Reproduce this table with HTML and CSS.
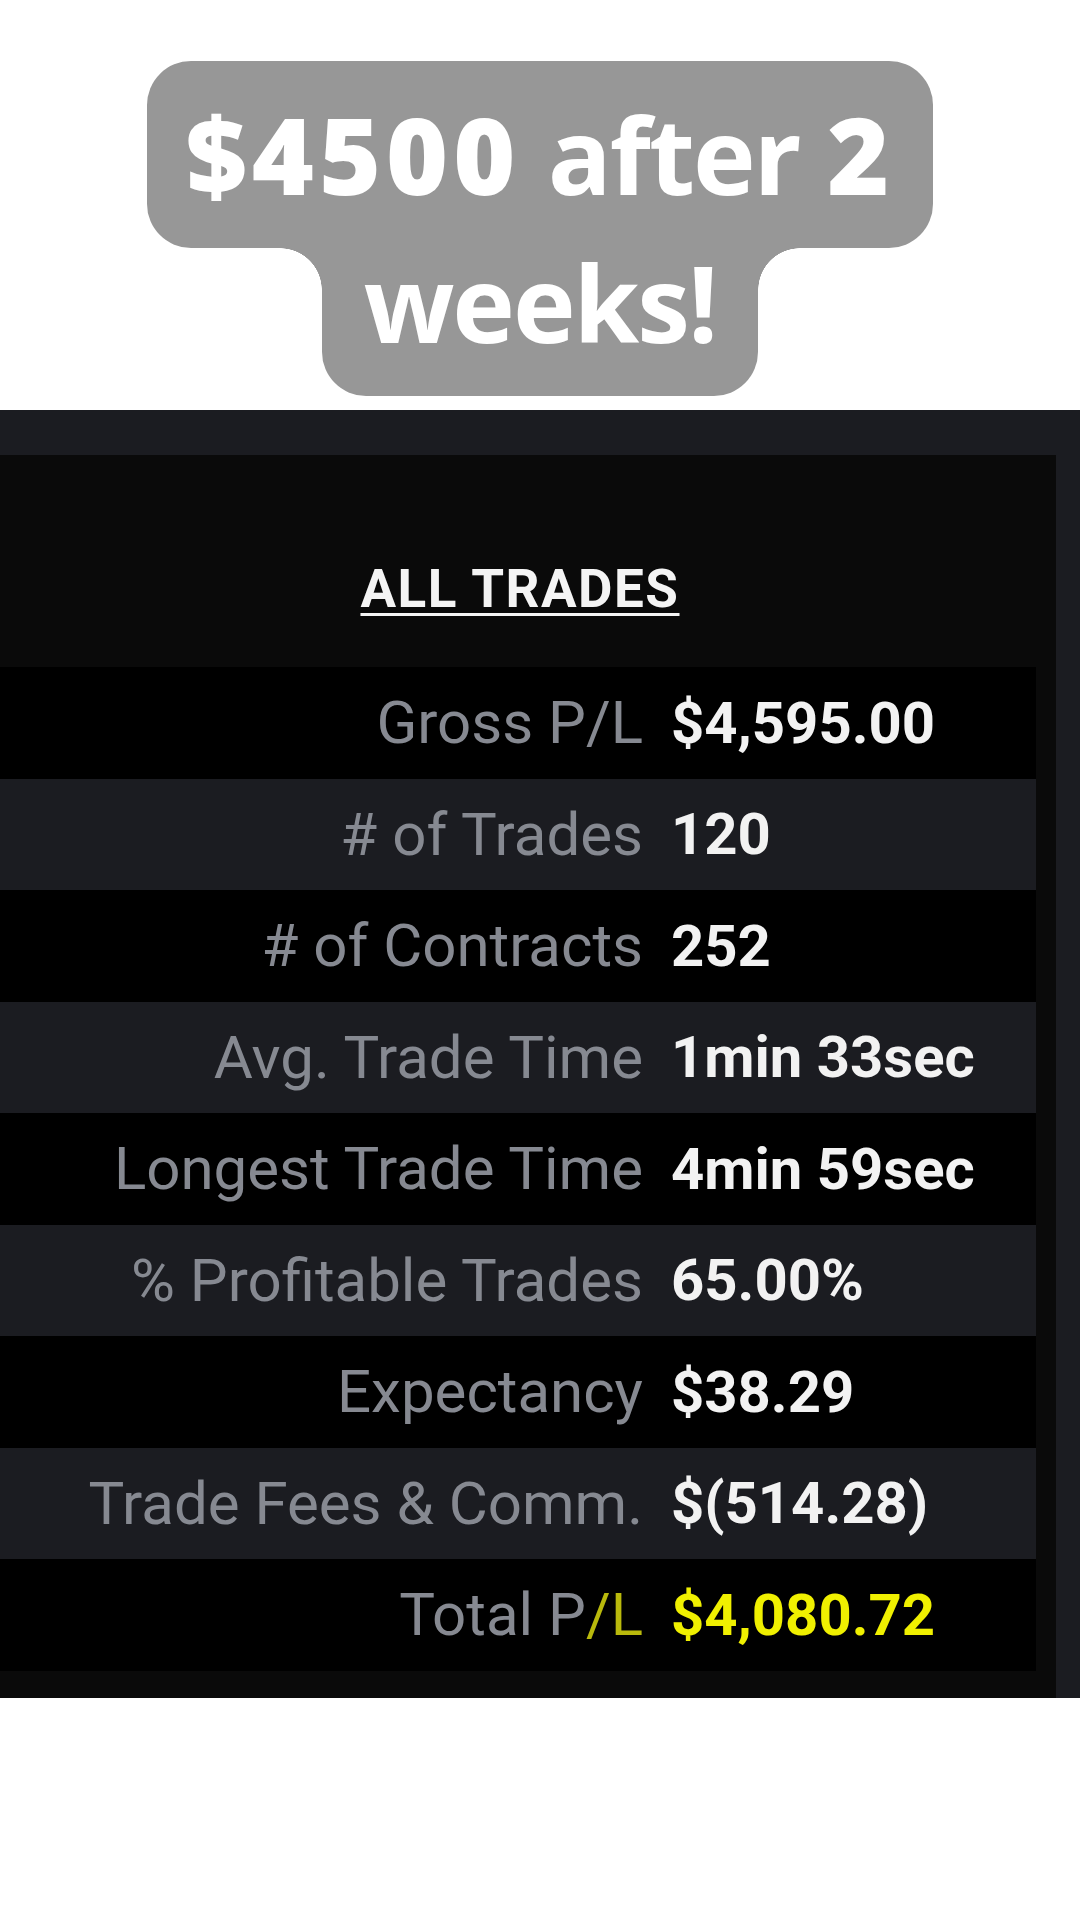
FILE: index.html
```html
<!DOCTYPE html>
<html lang="en">
<head>
<meta charset="utf-8">
<title>All Trades</title>
<link rel="stylesheet" href="styles.css">
</head>
<body>
  <header class="hero">
    <div class="bubble">
      <div class="line line-one"><span class="num">$4500</span> <span class="words">after</span> <span class="num">2</span></div>
      <div class="line line-two"><span class="words">weeks!</span></div>
    </div>
  </header>

  <section class="panel">
    <div class="panel-top"></div>
    <div class="panel-inner">
      <div class="content">
        <h2 class="title">ALL TRADES</h2>
        <div class="stats">
          <div class="row"><span class="label">Gross P/L</span><span class="value">$4,595.00</span></div>
          <div class="row"><span class="label"># of Trades</span><span class="value">120</span></div>
          <div class="row"><span class="label"># of Contracts</span><span class="value">252</span></div>
          <div class="row"><span class="label">Avg. Trade Time</span><span class="value">1min 33sec</span></div>
          <div class="row"><span class="label">Longest Trade Time</span><span class="value">4min 59sec</span></div>
          <div class="row"><span class="label">% Profitable Trades</span><span class="value">65.00%</span></div>
          <div class="row"><span class="label">Expectancy</span><span class="value">$38.29</span></div>
          <div class="row"><span class="label">Trade Fees &amp; Comm.</span><span class="value">$(514.28)</span></div>
          <div class="row total"><span class="label">Total P<span class="ghost">/L</span></span><span class="value">$4,080.72</span></div>
        </div>
      </div>
    </div>
  </section>
</body>
</html>
```

FILE: styles.css
```css
html, body {
  margin: 0;
  padding: 0;
}

body {
  width: 1080px;
  height: 1920px;
  background: #ffffff;
  overflow: hidden;
}

/* ---------- headline bubble ---------- */
.hero {
  height: 410px;
  box-sizing: border-box;
  padding-top: 61px;
  display: flex;
  justify-content: center;
}

.bubble {
  display: flex;
  flex-direction: column;
  align-items: center;
}

.line {
  background: #979797;
  color: #ffffff;
  font-family: "Open Sans", "DejaVu Sans", sans-serif;
  font-weight: 800;
  font-size: 106px;
  line-height: 106px;
  text-align: center;
  white-space: nowrap;
  box-sizing: border-box;
}

.num {
  font-weight: 800;
  letter-spacing: 5px;
}

.words {
  font-weight: 700;
  letter-spacing: -2px;
}

.line-one {
  width: 786px;
  height: 187px;
  padding-top: 40px;
  border-radius: 44px;
}

.line-two {
  position: relative;
  width: 436px;
  height: 148px;
  padding-top: 1px;
  border-radius: 0 0 44px 44px;
}

.line-two::before,
.line-two::after {
  content: "";
  position: absolute;
  top: 0;
  width: 42px;
  height: 42px;
}

.line-two::before {
  left: -42px;
  background: radial-gradient(circle at 0 100%, rgba(151,151,151,0) 41.5px, #979797 42px);
}

.line-two::after {
  right: -42px;
  background: radial-gradient(circle at 100% 100%, rgba(151,151,151,0) 41.5px, #979797 42px);
}

/* ---------- dark stats panel ---------- */
.panel {
  height: 1288px;
  background: #1b1c21;
  display: flex;
  flex-direction: column;
}

.panel-top {
  height: 45px;
  flex: none;
}

.panel-inner {
  flex: 1;
  margin-right: 24px;
  background: #0a0a0a;
  padding-right: 20px;
}

.content {
  display: flex;
  flex-direction: column;
}

.title {
  margin: 0;
  padding-top: 108px;
  padding-bottom: 52px;
  padding-left: 4px;
  text-align: center;
  font-family: Roboto, "Liberation Sans", sans-serif;
  font-weight: 700;
  font-size: 53px;
  line-height: 52px;
  letter-spacing: 1.5px;
  color: #f4f4f4;
  text-decoration: underline;
  text-decoration-thickness: 3px;
  text-underline-offset: 6px;
}

.stats {
  display: flex;
  flex-direction: column;
}

.row {
  height: 111.5px;
  display: grid;
  grid-template-columns: 643px auto;
  column-gap: 28px;
  align-items: center;
  font-family: Roboto, "Liberation Sans", sans-serif;
  font-size: 60px;
  white-space: nowrap;
  background: #000000;
}

.row:nth-child(even) {
  background: #1b1c21;
}

.label {
  text-align: right;
  color: #868991;
  font-weight: 400;
}

.value {
  color: #f2f2f2;
  font-weight: 700;
  font-size: 58px;
}

.total .value {
  color: #f0f000;
}

.total .ghost {
  color: #b9b90c;
}
```
